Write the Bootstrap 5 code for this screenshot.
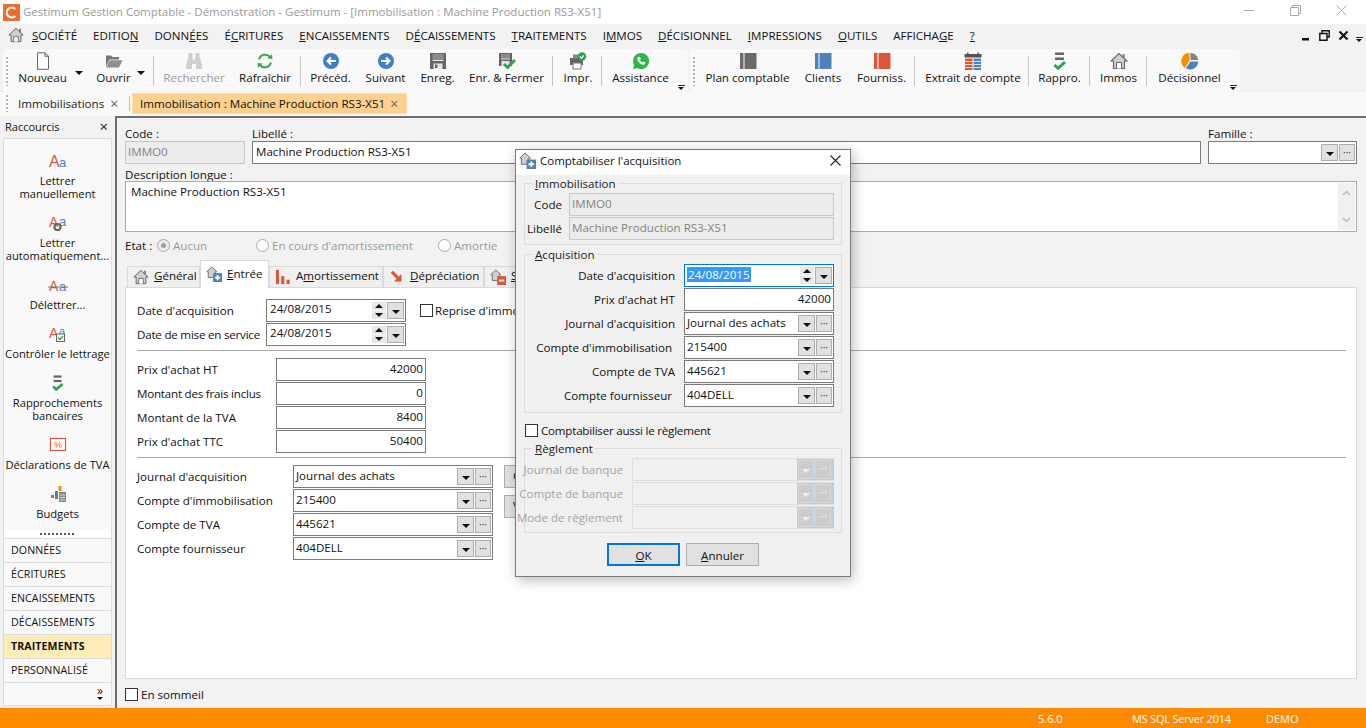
<!DOCTYPE html>
<html lang="fr"><head><meta charset="utf-8"><title>Gestimum</title>
<link href="https://cdn.jsdelivr.net/npm/bootstrap@5.3.0/dist/css/bootstrap.min.css" rel="stylesheet">
<style>
html,body{height:100%;overflow:hidden}
body{width:1366px;height:728px;font-family:"Open Sans","Noto Sans",sans-serif;font-size:11.6px;line-height:15px;color:#111;background:#f2f2f2;position:relative}
u{text-decoration-thickness:1px;text-underline-offset:1px}
.titlebar{height:24px;background:#fff;color:#9a9a9a;font-size:11.5px;padding:0 2px 2px 3px}
.logo{width:17px;height:17px;margin:2px 3px 0 0}
.winbtns{margin-left:auto}
.winbtn{width:46px;height:22px;padding-bottom:2px}
.menubar{height:24px;padding:0 0 2px 8px;background:#f2f2f2;font-size:11.57px}
.menu-home{width:16px;height:18px;margin-right:8px}
.menu-list{gap:16px}
.mdi{margin-left:auto;gap:8px}
.mdi-more{width:7px;margin:8px 3px 0 -1px}
.toolrow{height:43px;margin-top:1px;padding-left:3px;gap:2px}
.toolgroup{height:43px;background:#f9f9f9;border-radius:4px;position:relative}
.tg-a{width:685px}.tg-b{width:550px}
.grip{width:2px;height:30px;margin:0 2px 0 3px;background-image:radial-gradient(circle,#b5b5b5 1px,transparent 1px);background-size:2px 4px}
.grip.wide{margin-right:11px}
.tb{height:43px;flex:none;padding-top:3px;align-items:center;display:flex;flex-direction:column}
.tb svg{width:18px;height:18px;flex:none}
.tb span{white-space:nowrap}
.tb.off{color:#9b9b9b}
.tc-grey{color:#6b6b6b}.tc-blue{color:#4f81bd}.tc-red{color:#d9583a}
.sepv{width:1px;height:30px;background:#c4c4c4;flex:none;margin:0 10px 0 9px}
.sepv.s3{margin-left:3px}.sepv.s3b{margin-left:2px}.sepv.s4{margin-right:11px}.sepv.s5{margin-right:12px}
.caret-s{width:13px;height:43px;flex:none;padding-top:22px}
.tri{display:block;width:0;height:0;border-left:4px solid transparent;border-right:4px solid transparent;border-top:4px solid #111}
.more{position:absolute;right:3px;bottom:2px;width:7px}
.more i,.mdi-more i{display:block;height:1px;background:#222;margin-bottom:1px}
.more .tri,.mdi-more .tri{border-left-width:3.5px;border-right-width:3.5px;border-top-width:3px}
.w28{width:28px}.w33{width:33px}.w36{width:36px}.w37{width:37px}.w39{width:39px}.w41{width:41px}.w47{width:47px}.w55{width:55px}.w60{width:60px}.w61{width:61px}.w66{width:66px}.w73{width:73px}.w83{width:83px}.w92{width:92px}.w65{width:65px}
.ml2{margin-left:2px}.ml8{margin-left:8px}.ml16{margin-left:16px}.ml17{margin-left:17px}
.tabrow{height:24px;padding:0 0 2px 3px;background:#f9f9f9}
.tabrow .grip{height:18px;margin:0 10px 0 3px}
.doc-tab{height:21px;white-space:nowrap}
.tab-a{width:108px;color:#222}
.tab-x{color:#666;font-size:14px;margin-left:6px}
.tab-sep{width:1px;height:15px;background:#bbb;margin:0 2px 0 3px}
.tab-b{width:275px;background:#fdd08e;border:1px solid #fedcaa;padding-left:7px}
.tab-b .tab-x{margin-left:5px}
.workspace{height:592px}
.sidebar{width:115px;padding:0 3px 2px 3px;flex:none}
.side-head{height:22px;padding:0 4px 2px 2px;font-size:11px}
.side-head b{font-weight:400;margin-left:auto;font-size:15px;color:#222}
.side-panel{height:393px;background:#f9f9f9;border:1px solid #dcdcdc;border-bottom:0;padding-top:14px;text-align:center;overflow:hidden}
.side-item{padding-bottom:15px;line-height:13px;font-size:11.2px}
.side-item svg{display:block;width:20px;height:16px;margin:0 auto 5px}
.side-dots{height:7px;background:#fff;border-left:1px solid #dcdcdc;border-right:1px solid #dcdcdc;position:relative}
.side-dots i{position:absolute;left:36px;top:2px;width:36px;height:2px;background-image:linear-gradient(90deg,#555 50%,transparent 50%);background-size:4px 2px}
.side-nav{border:1px solid #dcdcdc;border-top:0;background:#f9f9f9}
.side-nav div{height:24px;border-top:1px solid #dcdcdc;padding:4px 0 0 7px;font-size:10.6px;letter-spacing:.1px}
.side-nav .on{background:#ffedb8;font-weight:700;color:#111}
.side-nav .tail{height:23px;position:relative;padding:0}
.tail .tail-g{position:absolute;right:8px;top:3px;font-size:12px;line-height:9px}
.tail .tri{position:absolute;right:8px;top:14px;border-left-width:3px;border-right-width:3px;border-top-width:3px}
.mainarea{flex:1;border-left:2px solid #6d6d6d;border-top:2px solid #6d6d6d;padding:0 9px 0 8px;min-width:0}
.top-row{gap:7px;padding-top:8px}
.lab{height:15px;display:block;margin:0}
.field{height:23px;background:#fff;border:1px solid #7a7a7a;padding:2px 2px 0 3px;line-height:15px;white-space:nowrap;overflow:hidden}
.field.dis{background:#ececec;border-color:#c8c8c8;color:#848484;padding-left:2px}
.f-code{width:120px}.f-fam{width:149px}
.desc-lab{margin-top:3px;height:14px}
.desc{height:51px;background:#fff;border:1px solid #aaa;padding:2px 5px;position:relative}
.scr{position:absolute;right:1px;top:1px;bottom:1px;width:17px;background:#f0f0f0}
.scr svg{position:absolute;left:4px;width:9px;height:6px}
.scr .su{top:7px}.scr .sd{bottom:7px}
.etat{height:19px;margin-top:4px;color:#9a9a9a}
.etat label{color:#111;width:28px;margin-right:4px;white-space:nowrap}
.radio-x{width:13px;height:13px;border:1px solid #aaa;border-radius:50%;background:#fff;margin-right:3px;flex:none;position:relative}
.radio-x.sel{background:#ececec}
.radio-x.sel:after{content:"";position:absolute;left:3px;top:3px;width:5px;height:5px;background:#9d9d9d;border-radius:50%}
.et1{width:83px}.et2{width:166px}
.wf-tabs{height:27px;margin-top:5px;padding-left:2px;align-items:flex-end}
.wf-tab{height:21px;background:#f0f0f0;border:1px solid #d9d9d9;border-bottom:0;white-space:nowrap;padding-left:5px;position:relative;flex:none}
.wf-tab svg{width:16px;height:16px;margin-right:5px;flex:none}
.wf-tab span{margin-bottom:3px}
.wf-tab.act{height:28px;background:#fff;z-index:2;margin-bottom:-1px;padding-bottom:1px}
.wf-tab.act span{margin-bottom:2px}
.wt1{width:73px}.wt2{width:69px}.wt3{width:114px}.wt4{width:101px}.wt5{width:80px}
.tabpanel{height:392px;background:#fff;border:1px solid #d9d9d9;padding:11px 9px 0 11px}
.frow{height:23px;margin-bottom:1px}
.frow label{margin:0;flex:none}
.l1{width:129px}.l2{width:139px}.l3{width:156px}
.tight{letter-spacing:-.22px}
.f1{width:140px}.f2{width:150px}.f3{width:200px}
.num{text-align:right}
.f-in{display:flex;padding:0;align-items:stretch}
.f-in .v{flex:1;padding:2px 3px 0 2px;overflow:hidden}
.f-in.t5 .v{padding:1px 3px 0 3px}
.b-drop,.b-more{margin:2px 1px 2px 0;background:#e1e1e1;border:1px solid #adadad;flex:none;position:relative}
.b-drop{width:17px}.b-more{width:16px}
.b-drop .tri{position:absolute;left:3.5px;top:7px}
.b-more{color:#333;font-size:10px;line-height:15px;text-align:center}
.spin{width:14px;margin:2px 1px 2px 0;flex:none;display:flex;flex-direction:column;gap:1px}
.spin span{flex:1;background:#e8e8e8;position:relative}
.spin .u:after,.spin .d:after{content:"";position:absolute;left:3px;top:2px;border-left:4px solid transparent;border-right:4px solid transparent}
.spin .u:after{border-bottom:4px solid #111}.spin .d:after{border-top:4px solid #111}
.chk{width:13px;height:13px;border:1px solid #333;background:#fff;flex:none;margin-right:3px}
.reprise{margin:0 2px 0 14px}
.hline{height:1px;background:#aaa;width:1209px;margin:4px 0 7px 0}
.combo-wrap{position:relative}
.side-btn{position:absolute;left:367px;width:90px;height:23px;background:#e1e1e1;border:1px solid #adadad;padding:2px 0 0 8px}
.side-btn.t1{top:0}.side-btn.t2{top:30px}
.som{height:27px;padding-top:4px}
.dlg{position:absolute;left:515px;top:149px;width:336px;height:428px;background:#f0f0f0;border:1px solid #7b7b7b;box-shadow:2px 3px 12px rgba(0,0,0,.28)}
.dlg-title{height:25px;background:#fff;padding:0 0 4px 3px;font-size:11.5px}
.dlg-title svg{width:17px;height:17px;margin-right:4px}
.dlg-title .x{margin-left:auto;margin-right:9px;width:11px;height:11px}
.grp{border:1px solid #dcdcdc;margin:0 8px;position:relative}
.grp-leg{position:absolute;left:8px;top:-8px;background:#f0f0f0;padding:0 2px;height:15px;font-size:11.6px;color:#222}
.g1{margin-top:8px;height:62px;padding:9px 7px 0 0}
.g2{margin-top:9px;height:159px;padding:9px 7px 0 0}
.g3{margin-top:10px;height:85px;padding:9px 7px 0 0}
.dl-1{width:37px;text-align:right;margin-right:7px!important}
.dl-2{width:150px;text-align:right;margin-right:9px!important}
.dl-2.bk{width:147px;margin-right:12px!important}
.dl-3{width:98px;margin-right:9px!important;color:#a3a3a3;white-space:nowrap;display:flex;justify-content:flex-end}
.dfield{flex:1;min-width:0}
.sel-txt{background:#3399ff;color:#fff;padding:0 1px}
.focus-blue{border-color:#0078d7}
.dis-combo{background:#f0f0f0;border:1px solid #dfdfdf;border-right:0;flex:1;height:23px;display:flex;min-width:0}
.dis-combo .sp{flex:1}
.dis-btns{display:flex;background:#b9cfe0;padding:0 1px 0 0;width:37px;flex:none}
.dis-btns div{width:16px;margin:1px 0 1px 1px;background:#cccccc;border:1px solid #d8d8d8;position:relative;color:#eee;font-size:10px;line-height:15px;text-align:center;flex:none}
.dis-btns .tri{position:absolute;left:3px;top:8px;border-top-color:#eee}
.chk-row{height:16px;margin:9px 0 0 9px}
.btn-row{margin-top:10px;gap:6px;padding-left:91px}
.wbtn{width:73px;height:23px;padding:2px 0 0;border-radius:0;background:#e1e1e1;border:1px solid #adadad;font-size:11.6px;line-height:15px;color:#111}
.wbtn.def{border:2px solid #0078d7;padding-top:1px}
.footbar{height:20px;background:#ff8a00;color:#fff;font-size:11px;position:absolute;left:0;right:0;bottom:0;padding-top:3px}
.ft1{margin-left:1038px;width:94px}.ft2{width:134px}
</style></head><body>
<svg width="0" height="0" class="position-absolute">
<symbol id="house" viewBox="0 0 18 18"><path d="M9 1.500 1 9h2.500v7.500h11V9H17L9 1.500Z" fill="#cfcfcf" stroke="#666" stroke-width="1.100"/><path d="M6.500 16.500v-6h5v6" fill="#fff" stroke="#666"/><rect x="12.600" y="2" width="2" height="4" fill="#777"/></symbol>
<symbol id="doc" viewBox="0 0 18 18"><path d="M3.500 .8h7.500l3.500 3.500v13h-11z" fill="#fff" stroke="#666"/><path d="M11 .8v3.500h3.500" fill="none" stroke="#666"/></symbol>
<symbol id="folder" viewBox="0 0 18 18"><path d="M1 3.500h5l1.500 1.500H14v2.500H4.500L1 15z" fill="#777"/><path d="M4.800 8.300H17.500L14 15.500H1.200z" fill="#8f8f8f"/></symbol>
<symbol id="binoc" viewBox="0 0 18 18"><g fill="#cfcfcf"><rect x="3.500" y="1" width="4" height="5"/><rect x="10.500" y="1" width="4" height="5"/><path d="M3 6h5v2h2V6h5l2 7v4h-6v-5H7v5H1v-4z"/></g></symbol>
<symbol id="refresh" viewBox="0 0 18 18"><path d="M3 7.500A6.300 6.300 0 0 1 14 5" fill="none" stroke="#3fa650" stroke-width="2"/><path d="m11.500 6.500 5 .5-.5-5z" fill="#3fa650"/><path d="M15 10.500A6.300 6.300 0 0 1 4 13" fill="none" stroke="#3fa650" stroke-width="2"/><path d="m6.500 11.500-5-.5.5 5z" fill="#3fa650"/></symbol>
<symbol id="prev" viewBox="0 0 18 18"><circle cx="9" cy="9" r="8" fill="#3f7fc6"/><path d="M14 9H6M9 5.500 5.500 9 9 12.500" fill="none" stroke="#fff" stroke-width="2"/></symbol>
<symbol id="next" viewBox="0 0 18 18"><circle cx="9" cy="9" r="8" fill="#3f7fc6"/><path d="M4 9h8M9 5.500 12.500 9 9 12.500" fill="none" stroke="#fff" stroke-width="2"/></symbol>
<symbol id="save" viewBox="0 0 18 18"><path d="M1 1h16v16H1z" fill="#666"/><rect x="3.500" y="2" width="11" height="6" fill="#8c8c8c"/><rect x="3.500" y="8" width="11" height="1" fill="#e8e8e8"/><rect x="4.500" y="11.500" width="9" height="5.500" fill="#e8e8e8"/><rect x="6" y="12.500" width="2.500" height="3.500" fill="#666"/></symbol>
<symbol id="savec" viewBox="0 0 18 18"><path d="M1 1h13v13H1z" fill="#666"/><rect x="3" y="2" width="9" height="4.500" fill="#8c8c8c"/><rect x="3" y="6.500" width="9" height="1" fill="#e8e8e8"/><rect x="3.500" y="9" width="8" height="5" fill="#e8e8e8"/><path d="m6 12 3.500 3.500L17 8" fill="none" stroke="#2ea44f" stroke-width="3"/></symbol>
<symbol id="print" viewBox="0 0 18 18"><path d="M1 6h13v7H1z" fill="#666"/><rect x="4" y="2.500" width="7" height="4" fill="#888"/><rect x="4" y="11" width="8" height="6" fill="#fff" stroke="#777"/><circle cx="13" cy="4.500" r="4.200" fill="#2ea44f"/><path d="m11 4.500 1.600 1.600L15 3.300" fill="none" stroke="#fff" stroke-width="1.200"/></symbol>
<symbol id="wa" viewBox="0 0 18 18"><path d="M9 1a8 8 0 0 0-6.900 12L1 17l4.100-1.100A8 8 0 1 0 9 1Z" fill="#2fb44a"/><path d="M6.200 4.800c-.8.600-1.200 1.700-.7 3.100.8 2.100 2.500 3.800 4.600 4.600 1.400.5 2.500.1 3.100-.7l.2-1.300-2.100-1-.9 1c-1.100-.4-2-1.300-2.500-2.500l1-.9-1-2.100z" fill="#fff"/></symbol>
<symbol id="book" viewBox="0 0 18 18"><rect x="1" y="1" width="3.500" height="16" fill="currentColor"/><rect x="5.500" y="1" width="12" height="16" fill="currentColor"/></symbol>
<symbol id="extr" viewBox="0 0 18 18"><rect x="0.500" y="2" width="17" height="16" fill="#fff"/><rect x="0.500" y="2" width="17" height="3.500" fill="#555"/><rect x="3" y=".5" width="1.500" height="3" fill="#555"/><rect x="13.500" y=".5" width="1.500" height="3" fill="#555"/><rect x="1" y="6.500" width="7.500" height="11.500" fill="#d9583a"/><rect x="9.500" y="6.500" width="7.500" height="11.500" fill="#4f81bd"/><path d="M1 9.500h7.500M1 12.500h7.500M1 15.500h7.500M9.500 9.500H17M9.500 12.500H17M9.500 15.500H17" stroke="#fff" stroke-width=".8"/></symbol>
<symbol id="rap" viewBox="0 0 18 18"><rect x="4" y="0.500" width="9" height="2.500" fill="#666"/><rect x="4" y="5.500" width="9" height="2.500" fill="#666"/><path d="m3.500 13 3.500 3.300L14 10" fill="none" stroke="#2ea44f" stroke-width="3"/></symbol>
<symbol id="pie" viewBox="0 0 18 18"><path d="M8.500 9V.8A8.300 8.300 0 0 0 4 16z" fill="#f39200"/><path d="M9.500 .8A8.300 8.300 0 0 1 17.300 8H9.500z" fill="#808080"/><path d="M9.500 9.500h7.800A8.300 8.300 0 0 1 4.800 16.300z" fill="#4f81bd"/></symbol>
<symbol id="hplus" viewBox="0 0 18 18"><path d="M6.500 1 .8 6.500h1.700V13h8V6.500h1.700z" fill="#cfcfcf" stroke="#666"/><rect x="8" y="8" width="10" height="10" fill="#4f81bd"/><path d="M13 10v6M10 13h6" stroke="#fff" stroke-width="2"/></symbol>
<symbol id="hminus" viewBox="0 0 18 18"><path d="M6.500 1 .8 6.500h1.700V13h8V6.500h1.700z" fill="#cfcfcf" stroke="#666"/><rect x="8" y="8" width="10" height="10" fill="#d9583a"/><path d="M10 13h6" stroke="#fff" stroke-width="2"/></symbol>
<symbol id="bars" viewBox="0 0 18 18"><g fill="#d9583a"><rect x="1" y="1" width="3.500" height="16"/><rect x="7" y="8" width="3.500" height="9"/><rect x="13" y="12" width="3.500" height="5"/></g></symbol>
<symbol id="dep" viewBox="0 0 18 18"><path d="M2 4.500 4.500 2 11 8.500 14 5.500V14H5.500l3-3z" fill="#d9583a"/></symbol>
</svg>

<header class="titlebar d-flex align-items-center">
<svg class="logo" viewBox="0 0 17 17"><rect width="17" height="17" rx="1" fill="#ee6c2b"/><path d="M12.300 5A5 5 0 1 0 12.300 12" fill="none" stroke="#fff" stroke-width="2"/></svg>
<span>Gestimum Gestion Comptable - Démonstration - Gestimum - [Immobilisation : Machine Production RS3-X51]</span>
<div class="winbtns d-flex">
<div class="winbtn d-flex align-items-center justify-content-center"><svg width="11" height="11" viewBox="0 0 11 11"><path d="M0 5.500h10" stroke="#aaa"/></svg></div>
<div class="winbtn d-flex align-items-center justify-content-center"><svg width="11" height="11" viewBox="0 0 11 11"><path d="M.5 2.500h8v8h-8zM2.500 2.500v-2h8v8h-2" fill="none" stroke="#aaa"/></svg></div>
<div class="winbtn d-flex align-items-center justify-content-center"><svg width="11" height="11" viewBox="0 0 11 11"><path d="m.5.500 10 10M10.500.500l-10 10" stroke="#aaa"/></svg></div>
</div></header>

<nav class="menubar d-flex align-items-center">
<svg class="menu-home"><use href="#house"/></svg>
<div class="menu-list d-flex">
<span><u>S</u>OCIÉTÉ</span><span>EDITIO<u>N</u></span><span>DONN<u>É</u>ES</span><span>É<u>C</u>RITURES</span><span><u>E</u>NCAISSEMENTS</span><span>D<u>É</u>CAISSEMENTS</span><span><u>T</u>RAITEMENTS</span><span>I<u>M</u>MOS</span><span><u>D</u>ÉCISIONNEL</span><span><u>I</u>MPRESSIONS</span><span><u>O</u>UTILS</span><span>AFFICHA<u>G</u>E</span><span><u>?</u></span>
</div>
<div class="mdi d-flex align-items-center">
<svg width="10" height="11" viewBox="0 0 10 11"><rect x="1" y="8" width="7" height="2.500" fill="#111"/></svg>
<svg width="11" height="11" viewBox="0 0 11 11"><path d="M3 3V.8h7.200V7H8M.8 3.500H8v6.700H.8z" fill="none" stroke="#111" stroke-width="1.400"/></svg>
<svg width="11" height="11" viewBox="0 0 11 11"><path d="m1.500 1.500 8 8M9.500 1.500l-8 8" stroke="#111" stroke-width="2.200"/></svg>
<div class="mdi-more"><i></i><span class="tri"></span></div>
</div></nav>

<div class="toolrow d-flex">
<div class="toolgroup tg-a d-flex align-items-center">
<div class="grip"></div>
<div class="tb w65"><svg><use href="#doc"/></svg><span>Nouveau</span></div>
<div class="caret-s"><span class="tri"></span></div>
<div class="tb w47 ml2"><svg><use href="#folder"/></svg><span>Ouvrir</span></div>
<div class="caret-s"><span class="tri"></span></div>
<div class="sepv s3"></div>
<div class="tb off w60"><svg><use href="#binoc"/></svg><span>Rechercher</span></div>
<div class="tb w66 ml8"><svg><use href="#refresh"/></svg><span>Rafraîchir</span></div>
<div class="sepv s3b"></div>
<div class="tb w39"><svg><use href="#prev"/></svg><span>Précéd.</span></div>
<div class="tb w39 ml16"><svg><use href="#next"/></svg><span>Suivant</span></div>
<div class="tb w33 ml16"><svg><use href="#save"/></svg><span>Enreg.</span></div>
<div class="tb w73 ml16"><svg><use href="#savec"/></svg><span>Enr. &amp; Fermer</span></div>
<div class="sepv s4"></div>
<div class="tb w28"><svg><use href="#print"/></svg><span>Impr.</span></div>
<div class="sepv s4"></div>
<div class="tb w55"><svg><use href="#wa"/></svg><span>Assistance</span></div>
<div class="more"><i></i><span class="tri"></span></div>
</div>
<div class="toolgroup tg-b d-flex align-items-center">
<div class="grip wide"></div>
<div class="tb w83"><svg class="tc-grey"><use href="#book"/></svg><span>Plan comptable</span></div>
<div class="tb w36 ml16"><svg class="tc-blue"><use href="#book"/></svg><span>Clients</span></div>
<div class="tb w47 ml17"><svg class="tc-red"><use href="#book"/></svg><span>Fourniss.</span></div>
<div class="sepv s5"></div>
<div class="tb w92"><svg><use href="#extr"/></svg><span>Extrait de compte</span></div>
<div class="sepv"></div>
<div class="tb w41"><svg><use href="#rap"/></svg><span>Rappro.</span></div>
<div class="sepv"></div>
<div class="tb w37"><svg><use href="#house"/></svg><span>Immos</span></div>
<div class="sepv s5"></div>
<div class="tb w61"><svg><use href="#pie"/></svg><span>Décisionnel</span></div>
<div class="more"><i></i><span class="tri"></span></div>
</div>
</div>

<div class="tabrow d-flex align-items-center">
<div class="grip"></div>
<div class="doc-tab tab-a d-flex align-items-center"><span>Immobilisations</span><span class="tab-x">×</span></div>
<div class="tab-sep"></div>
<div class="doc-tab tab-b d-flex align-items-center"><span>Immobilisation : Machine Production RS3-X51</span><span class="tab-x">×</span></div>
</div>

<div class="workspace d-flex">
<aside class="sidebar">
<div class="side-head d-flex align-items-center"><span>Raccourcis</span><b>×</b></div>
<div class="side-panel">
<div class="side-item"><svg viewBox="0 0 20 16"><text x="1" y="14" font-family="Liberation Sans" font-size="16" fill="#d9583a">A</text><text x="11" y="14" font-family="Liberation Sans" font-size="13" fill="#4f81bd">a</text></svg>Lettrer<br>manuellement</div>
<div class="side-item"><svg viewBox="0 0 20 16"><text x="1" y="12" font-family="Liberation Sans" font-size="14" fill="#d9583a">A</text><text x="11" y="11" font-family="Liberation Sans" font-size="13" fill="#4f81bd">a</text><circle cx="9.500" cy="12" r="3" fill="none" stroke="#666" stroke-width="2.200"/></svg>Lettrer<br>automatiquement...</div>
<div class="side-item"><svg viewBox="0 0 20 16"><text x="1" y="14" font-family="Liberation Sans" font-size="14" fill="#d9583a">A</text><text x="11" y="14" font-family="Liberation Sans" font-size="13" fill="#4f81bd">a</text><path d="M0 10h20" stroke="#777"/></svg>Délettrer...</div>
<div class="side-item"><svg viewBox="0 0 20 16"><text x="1" y="12" font-family="Liberation Sans" font-size="14" fill="#d9583a">A</text><text x="11" y="9" font-family="Liberation Sans" font-size="11" fill="#4f81bd">a</text><rect x="8.500" y="8" width="8" height="7.500" fill="#fff" stroke="#666"/><path d="m10 11.500 2 2 3-3.500" fill="none" stroke="#2ea44f" stroke-width="1.300"/></svg>Contrôler le lettrage</div>
<div class="side-item"><svg><use href="#rap"/></svg>Rapprochements<br>bancaires</div>
<div class="side-item"><svg viewBox="0 0 20 16"><rect x="2.500" y="1.500" width="15" height="12" fill="#fff" stroke="#d9583a" stroke-width="1.200"/><text x="6" y="11" font-family="Liberation Sans" font-size="9" fill="#d9583a">%</text></svg>Déclarations de TVA</div>
<div class="side-item"><svg viewBox="0 0 20 16"><rect x="3" y="9" width="3" height="3" fill="#d9583a"/><rect x="7" y="5" width="3" height="8" fill="#4f81bd"/><rect x="10.500" y="0" width="3" height="5" fill="#f39200"/><rect x="11" y="6" width="7" height="10" fill="#888"/><path d="M12 9h5M12 11.500h5M12 14h5" stroke="#ddd"/></svg>Budgets</div>
</div>
<div class="side-dots"><i></i></div>
<div class="side-nav">
<div>DONNÉES</div><div>ÉCRITURES</div><div>ENCAISSEMENTS</div><div>DÉCAISSEMENTS</div><div class="on">TRAITEMENTS</div><div>PERSONNALISÉ</div>
<div class="tail"><span class="tail-g">»</span><span class="tri"></span></div>
</div>
</aside>

<main class="mainarea">
<div class="top-row d-flex">
<div class="f-code"><label class="lab">Code :</label><div class="field dis">IMMO0</div></div>
<div class="flex-grow-1"><label class="lab">Libellé :</label><div class="field">Machine Production RS3-X51</div></div>
<div class="f-fam"><label class="lab">Famille :</label><div class="field f-in"><div class="v"></div><div class="b-drop"><span class="tri"></span></div><div class="b-more">···</div></div></div>
</div>
<label class="lab desc-lab">Description longue :</label>
<div class="desc">Machine Production RS3-X51<div class="scr"><svg class="su" viewBox="0 0 9 6"><path d="m1 5 3.500-3.500L8 5" fill="none" stroke="#bbb" stroke-width="1.500"/></svg><svg class="sd" viewBox="0 0 9 6"><path d="m1 1 3.500 3.500L8 1" fill="none" stroke="#bbb" stroke-width="1.500"/></svg></div></div>
<div class="etat d-flex align-items-center">
<label>Etat :</label>
<span class="radio-x sel"></span><span class="et1">Aucun</span>
<span class="radio-x"></span><span class="et2">En cours d'amortissement</span>
<span class="radio-x"></span><span>Amortie</span>
</div>
<div class="wf-tabs d-flex">
<div class="wf-tab wt1 d-flex align-items-center"><svg><use href="#house"/></svg><span><u>G</u>énéral</span></div>
<div class="wf-tab wt2 act d-flex align-items-center"><svg><use href="#hplus"/></svg><span><u>E</u>ntrée</span></div>
<div class="wf-tab wt3 d-flex align-items-center"><svg><use href="#bars"/></svg><span>A<u>m</u>ortissement</span></div>
<div class="wf-tab wt4 d-flex align-items-center"><svg><use href="#dep"/></svg><span><u>D</u>épréciation</span></div>
<div class="wf-tab wt5 d-flex align-items-center"><svg><use href="#hminus"/></svg><span><u>S</u>ortie</span></div>
</div>
<div class="tabpanel">
<div class="frow d-flex align-items-center"><label class="l1">Date d'acquisition</label><div class="field f1 f-in t5"><div class="v">24/08/2015</div><div class="spin"><span class="u"></span><span class="d"></span></div><div class="b-drop"><span class="tri"></span></div></div><span class="chk reprise"></span><span>Reprise d'immobilisation</span></div>
<div class="frow d-flex align-items-center"><label class="l1 tight">Date de mise en service</label><div class="field f1 f-in t5"><div class="v">24/08/2015</div><div class="spin"><span class="u"></span><span class="d"></span></div><div class="b-drop"><span class="tri"></span></div></div></div>
<div class="hline"></div>
<div class="frow d-flex align-items-center"><label class="l2">Prix d'achat HT</label><div class="field f2 num">42000</div></div>
<div class="frow d-flex align-items-center"><label class="l2 tight">Montant des frais inclus</label><div class="field f2 num">0</div></div>
<div class="frow d-flex align-items-center"><label class="l2">Montant de la TVA</label><div class="field f2 num">8400</div></div>
<div class="frow d-flex align-items-center"><label class="l2">Prix d'achat TTC</label><div class="field f2 num">50400</div></div>
<div class="hline"></div>
<div class="combo-wrap">
<div class="side-btn t1">C</div><div class="side-btn t2">V</div>
<div class="frow d-flex align-items-center"><label class="l3">Journal d'acquisition</label><div class="field f3 f-in"><div class="v">Journal des achats</div><div class="b-drop"><span class="tri"></span></div><div class="b-more">···</div></div></div>
<div class="frow d-flex align-items-center"><label class="l3">Compte d'immobilisation</label><div class="field f3 f-in"><div class="v">215400</div><div class="b-drop"><span class="tri"></span></div><div class="b-more">···</div></div></div>
<div class="frow d-flex align-items-center"><label class="l3">Compte de TVA</label><div class="field f3 f-in"><div class="v">445621</div><div class="b-drop"><span class="tri"></span></div><div class="b-more">···</div></div></div>
<div class="frow d-flex align-items-center"><label class="l3">Compte fournisseur</label><div class="field f3 f-in"><div class="v">404DELL</div><div class="b-drop"><span class="tri"></span></div><div class="b-more">···</div></div></div>
</div>
</div>
<div class="som d-flex align-items-center"><span class="chk"></span><span>En sommeil</span></div>
</main>
</div>

<div class="footbar d-flex"><span class="ft1">5.6.0</span><span class="ft2 tight">MS SQL Server 2014</span><span>DEMO</span></div>

<section class="dlg" role="dialog">
<div class="dlg-title d-flex align-items-center"><svg><use href="#hplus"/></svg><span>Comptabiliser l'acquisition</span><svg class="x" viewBox="0 0 11 11"><path d="m.5.500 10 10M10.500.500l-10 10" stroke="#222" stroke-width="1.100"/></svg></div>
<div class="grp g1"><div class="grp-leg"><u>I</u>mmobilisation</div>
<div class="frow d-flex align-items-center"><label class="dl-1">Code</label><div class="field dis dfield">IMMO0</div></div>
<div class="frow d-flex align-items-center"><label class="dl-1">Libellé</label><div class="field dis dfield">Machine Production RS3-X51</div></div>
</div>
<div class="grp g2"><div class="grp-leg"><u>A</u>cquisition</div>
<div class="frow d-flex align-items-center"><label class="dl-2">Date d'acquisition</label><div class="field dfield f-in focus-blue"><div class="v"><span class="sel-txt">24/08/2015</span></div><div class="spin"><span class="u"></span><span class="d"></span></div><div class="b-drop"><span class="tri"></span></div></div></div>
<div class="frow d-flex align-items-center"><label class="dl-2">Prix d'achat HT</label><div class="field dfield num">42000</div></div>
<div class="frow d-flex align-items-center"><label class="dl-2">Journal d'acquisition</label><div class="field dfield f-in"><div class="v">Journal des achats</div><div class="b-drop"><span class="tri"></span></div><div class="b-more">···</div></div></div>
<div class="frow d-flex align-items-center"><label class="dl-2 bk">Compte d'immobilisation</label><div class="field dfield f-in"><div class="v">215400</div><div class="b-drop"><span class="tri"></span></div><div class="b-more">···</div></div></div>
<div class="frow d-flex align-items-center"><label class="dl-2">Compte de TVA</label><div class="field dfield f-in"><div class="v">445621</div><div class="b-drop"><span class="tri"></span></div><div class="b-more">···</div></div></div>
<div class="frow d-flex align-items-center"><label class="dl-2 bk">Compte fournisseur</label><div class="field dfield f-in"><div class="v">404DELL</div><div class="b-drop"><span class="tri"></span></div><div class="b-more">···</div></div></div>
</div>
<div class="chk-row d-flex align-items-center"><span class="chk"></span><span class="tight">Comptabiliser aussi le règlement</span></div>
<div class="grp g3"><div class="grp-leg"><u>R</u>èglement</div>
<div class="frow d-flex align-items-center"><label class="dl-3">Journal de banque</label><div class="dis-combo"><div class="sp"></div><div class="dis-btns"><div><span class="tri"></span></div><div>···</div></div></div></div>
<div class="frow d-flex align-items-center"><label class="dl-3">Compte de banque</label><div class="dis-combo"><div class="sp"></div><div class="dis-btns"><div><span class="tri"></span></div><div>···</div></div></div></div>
<div class="frow d-flex align-items-center"><label class="dl-3">Mode de règlement</label><div class="dis-combo"><div class="sp"></div><div class="dis-btns"><div><span class="tri"></span></div><div>···</div></div></div></div>
</div>
<div class="btn-row d-flex"><button type="button" class="btn wbtn def"><u>O</u>K</button><button type="button" class="btn wbtn"><u>A</u>nnuler</button></div>
</section>
</body></html>
